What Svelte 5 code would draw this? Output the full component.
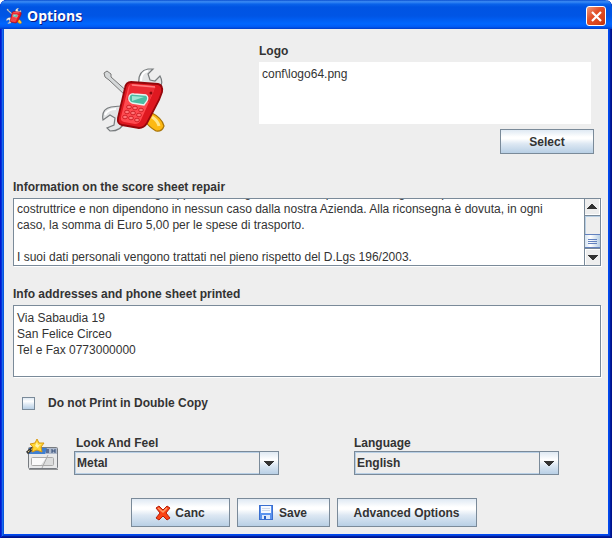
<script>
  import { onMount } from 'svelte';

  let logoPath = $state('conf\\logo64.png');
  let repairInfo = $state(
    [
      'I costi e le attese relativi alla riparazione',
      'Eventuali ritardi e costi degli apparecchi in garanzia, che spettano o vengono imposti dalla casa',
      'costruttrice e non dipendono in nessun caso dalla nostra Azienda. Alla riconsegna è dovuta, in ogni',
      'caso, la somma di Euro 5,00 per le spese di trasporto.',
      '',
      'I suoi dati personali vengono trattati nel pieno rispetto del D.Lgs 196/2003.'
    ].join('\n')
  );
  let addresses = $state('Via Sabaudia 19\nSan Felice Circeo\nTel e Fax 0773000000');
  let singleCopy = $state(false);
  let look = $state('Metal');
  let language = $state('English');
  let repairBox;

  onMount(() => {
    repairBox.scrollTop = repairBox.scrollHeight;
  });

  function scrollLines(n) {
    repairBox.scrollTop += n * 16;
  }
</script>

{#snippet phone(size)}
  <svg class="phone" width={size} height={size} viewBox="0 0 64 64" aria-hidden="true">
    <path d="M3 5 L6 3 L10 6 L10 9 L28 25 L25 28 L8 12 L4 9 Z" fill="#d5d8d9" stroke="#777" stroke-width="1" />
    <path d="M46 49 L51 45 Q61 50 63 58 Q61 64 55 63 Q48 59 44 53 Z" fill="#fdb913" stroke="#a87408" stroke-width="1.2" />
    <path d="M51 49 Q57 53 58 58" fill="none" stroke="#ffe68a" stroke-width="3" />
    <path d="M38 18 Q36 3 47 1 L52 1 L47 6 L49 12 L54 13 L59 8 Q63 15 58 22 L48 30 L23 54 Q21 63 9 63 L6 60 L13 57 L14 50 L9 47 L2 52 Q0 41 10 39 L19 38 Z" fill="#e3e5e6" stroke="#787c7e" stroke-width="1.2" />
    <path d="M40 13 Q40 4 47 3 M4 47 Q7 41 15 41" fill="none" stroke="#fff" stroke-width="2" />
    <path d="M24 20 Q25 14 30 14 L57 16 Q62 17 61 24 L58 32 L46 55 Q43 60 38 60 L21 57 Q16 56 17 50 Z" fill="#df1820" stroke="#96060b" stroke-width="1.8" />
    <path d="M27 20 Q28 16 32 16 L54 18 L52 25 L40 52 Q38 56 34 56 L23 54 Q19 53 20 49 Z" fill="#ff4a50" />
    <path d="M29 17 L55 19 L51 25 L48 34 L26 32 Z" fill="#ec2b33" />
    <path d="M31 17 L54 19" stroke="#ff7d80" stroke-width="1.5" />
    <path d="M28 29 Q29 25 33 26 L45 27 Q48 29 46 33 L43 37 L31 35 Q27 33 28 29 Z" fill="#4cbca3" stroke="#e8f4f0" stroke-width="1.3" />
    <path d="M31 28 L43 29 L31 33 Z" fill="#9fe5d4" />
    <circle cx="50" cy="25" r="1.5" fill="#8c070b" />
    <g fill="#ff7477" stroke="#c4141b" stroke-width=".8">
      <ellipse cx="28" cy="39" rx="2.4" ry="1.8" /><ellipse cx="34" cy="40" rx="2.4" ry="1.8" /><ellipse cx="40" cy="42" rx="2.4" ry="1.8" />
      <ellipse cx="26" cy="44" rx="2.4" ry="1.8" /><ellipse cx="32" cy="45" rx="2.4" ry="1.8" /><ellipse cx="38" cy="47" rx="2.4" ry="1.8" />
      <ellipse cx="24" cy="49" rx="2.4" ry="1.8" /><ellipse cx="30" cy="50" rx="2.4" ry="1.8" /><ellipse cx="36" cy="52" rx="2.4" ry="1.8" />
    </g>
  </svg>
{/snippet}

{#snippet arrow()}
  <svg width="10" height="5" viewBox="0 0 10 5" shape-rendering="crispEdges" aria-hidden="true">
    <path d="M0 0H10V1H9V2H8V3H7V4H6V5H4V4H3V3H2V2H1V1H0Z" fill="#333" />
  </svg>
{/snippet}

<div class="window">
  <header>
    {@render phone(16)}
    <h1>Options</h1>
    <button class="close" aria-label="Close">
      <svg width="11" height="11" viewBox="0 0 11 11" aria-hidden="true">
        <path d="M1 1L10 10M10 1L1 10" stroke="#fff" stroke-width="2.2" />
      </svg>
    </button>
  </header>

  <main>
    <section class="top">
      <div class="preview">{@render phone(64)}</div>
      <div class="logo">
        <label for="logo">Logo</label>
        <textarea id="logo" class="path" spellcheck="false" bind:value={logoPath}></textarea>
        <button class="btn select">Select</button>
      </div>
    </section>

    <section class="group">
      <label for="repair">Information on the score sheet repair</label>
      <div class="box">
        <textarea id="repair" class="repair" spellcheck="false" bind:this={repairBox} bind:value={repairInfo}></textarea>
        <div class="scrollbar">
          <button class="up" aria-label="Scroll up" onclick={() => scrollLines(-1)}>{@render arrow()}</button>
          <div class="track"><div class="thumb"><i></i><i></i><i></i></div></div>
          <button aria-label="Scroll down" onclick={() => scrollLines(1)}>{@render arrow()}</button>
        </div>
      </div>
    </section>

    <section class="group">
      <label for="addresses">Info addresses and phone sheet printed</label>
      <div class="box">
        <textarea id="addresses" class="addresses" spellcheck="false" bind:value={addresses}></textarea>
      </div>
    </section>

    <label class="check"><input type="checkbox" bind:checked={singleCopy} />Do not Print in Double Copy</label>

    <section class="choices">
      <svg class="skin" width="34" height="34" viewBox="0 0 34 34" aria-hidden="true">
        <rect x="2.500" y="9.500" width="29" height="21" rx="1" fill="#e8e9ea" stroke="#777b80" />
        <rect x="3" y="10" width="28" height="6" fill="#3f7fd2" />
        <path d="M21 10H31V16H19Z" fill="#aeb9cb" />
        <rect x="20" y="11" width="3" height="4" fill="#5b6f95" />
        <path d="M26 11v4M29 11v4M26 13h3" stroke="#334c78" stroke-width="1" />
        <rect x="5.500" y="19.500" width="22" height="8" rx="1" fill="#fafafa" stroke="#a9a9a9" />
        <path d="M20 20H27V27H15Z" fill="#dcdddd" />
        <path d="M16 30L22 17" stroke="#aaa" />
        <path d="M3 31.500H32" stroke="#55585c" stroke-opacity=".6" />
        <path d="M1 15L8 9" stroke="#383838" stroke-width="3" />
        <path d="M2 14L7 10" stroke="#e8d48e" stroke-width="1" stroke-dasharray="2 2" />
        <path d="M11 1L13 5L18 5L15 9L16 14L11 12L6 14L7 9L4 6L9 5Z" fill="#ffd633" stroke="#d99a13" />
        <path d="M11 4L12 7L15 6L13 8L12 10L9 8Z" fill="#fff3ad" />
      </svg>
      <div class="choice">
        <label for="look">Look And Feel</label>
        <div class="combo">
          <select id="look" bind:value={look}>
            <option>Metal</option>
            <option>Windows</option>
          </select>
          <span class="drop">{@render arrow()}</span>
        </div>
      </div>
      <div class="choice">
        <label for="language">Language</label>
        <div class="combo">
          <select id="language" bind:value={language}>
            <option>English</option>
            <option>Italiano</option>
          </select>
          <span class="drop">{@render arrow()}</span>
        </div>
      </div>
    </section>

    <footer>
      <button class="btn canc">
        <svg width="16" height="16" viewBox="0 0 16 16" aria-hidden="true">
          <path d="M1 3L4 1L8 5L12 1L15 3L11 8L15 13L12 15L8 11L4 15L1 13L5 8Z" fill="#fa4316" stroke="#b51c08" />
          <path d="M3 3L8 7L12 3" fill="none" stroke="#ff9a68" stroke-width="1.500" />
        </svg>
        Canc
      </button>
      <button class="btn save">
        <svg width="14" height="15" viewBox="0 0 14 15" aria-hidden="true">
          <rect x=".5" y=".5" width="13" height="14" fill="#5b93ee" stroke="#3a6fd0" />
          <rect x="2" y="1" width="10" height="7" fill="#f6f9ff" />
          <path d="M3 3.500H11M3 5.500H11" stroke="#ced8ea" />
          <rect x="3" y="10" width="8" height="4" fill="#dce7fa" />
          <rect x="5" y="11" width="2" height="3" fill="#265ec5" />
        </svg>
        Save
      </button>
      <button class="btn advanced">Advanced Options</button>
    </footer>
  </main>
</div>

<style>
  :global(body) {
    margin: 0;
    background: #fff;
  }

  .window,
  .window button,
  .window textarea,
  .window select {
    font: bold 12px/16px 'Liberation Sans', Arial, sans-serif;
    color: #333;
  }

  .window * {
    box-sizing: border-box;
  }

  .window {
    box-sizing: border-box;
    padding: 0 4px 4px;
    border-radius: 7px 7px 0 0;
    background: #eee;
    box-shadow:
      inset 1px 0 #0019cf,
      inset -1px -1px #00138c,
      inset 2px 0 #0831d9,
      inset -2px -2px #001ea0,
      inset 3px 0 #166aee,
      inset -3px -3px #0441d8,
      inset 4px 0 #0855dd,
      inset -4px -4px #0048f1;
  }

  header {
    display: flex;
    align-items: center;
    gap: 5px;
    height: 29px;
    margin: 0 -4px;
    padding: 3px 6px 0;
    border-radius: 7px 7px 0 0;
    background: linear-gradient(#0a4fd0, #3c8cf5 6%, #0a63ea 14%, #0054e3 24%, #0055e5 55%, #0066ff 82%, #005bf5 92%, #003dc8);
  }

  .window h1 {
    flex: 1;
    margin: 0;
    font: 700 14px/20px 'Open Sans', 'Noto Sans', sans-serif;
    color: #fff;
    text-shadow: 1px 1px #0a1883;
  }

  button {
    padding: 0;
    cursor: default;
  }

  .close {
    display: flex;
    align-items: center;
    justify-content: center;
    width: 20px;
    height: 20px;
    border: 1px solid #fff;
    border-radius: 3px;
    background: linear-gradient(135deg, #f09a7c, #e2512a 40%, #d8431a 75%, #b92f0c);
  }

  main {
    padding: 14px 7px 7px 9px;
  }

  label {
    display: block;
  }

  textarea {
    display: block;
    width: 100%;
    margin: 0;
    border: 0;
    border-radius: 0;
    padding: 4px 3px;
    background: #fff;
    resize: none;
    outline: 0;
    overflow: hidden;
  }

  .window textarea {
    font-weight: normal;
  }

  .top {
    display: flex;
    padding-right: 7px;
  }

  .preview {
    flex: 0 0 246px;
    padding: 25px 0 0 88px;
  }

  .preview .phone {
    display: block;
  }

  .logo {
    flex: 1;
    display: flex;
    flex-direction: column;
  }

  .path {
    width: auto;
    height: 62px;
    margin: 3px 3px 5px 0;
  }

  .btn {
    display: flex;
    align-items: center;
    justify-content: center;
    gap: 4px;
    height: 29px;
    border: 1px solid #7a8a99;
    background: linear-gradient(#dfe9f3, #fff 30%, #fff 38%, #dde8f3 60%, #b8cfe5);
  }

  .select {
    align-self: flex-end;
    width: 94px;
    height: 25px;
  }

  .group {
    margin-top: 20px;
  }

  .top + .group {
    margin-top: 25px;
  }

  .box {
    display: flex;
    margin-top: 3px;
    border: 1px solid #7a8a99;
    box-shadow: 1px 1px #fff;
  }

  .repair {
    flex: 1;
    height: 66px;
    padding-bottom: 0;
    scrollbar-width: none;
    overflow-y: scroll;
  }

  .scrollbar {
    display: flex;
    flex-direction: column;
    width: 16px;
    border-left: 1px solid #7a8a99;
    background: #eee;
  }

  .scrollbar button {
    display: flex;
    align-items: center;
    justify-content: center;
    height: 16px;
    border: 0;
    background: #eee;
    box-shadow: inset 1px 1px #fff;
  }

  .up {
    transform: rotate(180deg);
  }

  .track {
    display: flex;
    flex: 1;
    flex-direction: column;
    justify-content: flex-end;
    border-top: 1px solid #7a8a99;
    border-bottom: 1px solid #7a8a99;
    box-shadow: inset 1px 1px #b8cfe5;
  }

  .thumb {
    display: flex;
    flex-direction: column;
    align-items: center;
    justify-content: center;
    gap: 1px;
    height: 14px;
    border: solid #6382bf;
    border-width: 1px 0;
    background: linear-gradient(90deg, #d5e3f2, #fff 35%, #b8cfe5);
  }

  .thumb i {
    width: 9px;
    height: 1px;
    background: #6382bf;
  }

  .addresses {
    height: 70px;
  }

  .check {
    display: flex;
    align-items: center;
    gap: 13px;
    margin: 18px 0 0 9px;
  }

  .check input {
    appearance: none;
    width: 13px;
    height: 13px;
    margin: 0;
    border: 1px solid #7a8a99;
    background: linear-gradient(#dfe9f3, #fff 30%, #dde8f3 60%, #b8cfe5);
  }

  .check input:checked {
    background: #333;
  }

  .choices {
    display: flex;
    align-items: center;
    margin: 24px 42px 0 13px;
  }

  .skin {
    flex: none;
    margin-right: 14px;
  }

  .choice {
    flex: 1;
  }

  .choice + .choice {
    margin-left: 75px;
  }

  .choice label {
    padding-left: 2px;
  }

  .choice + .choice label {
    padding-left: 0;
  }

  .combo {
    position: relative;
  }

  select {
    display: block;
    appearance: none;
    width: 100%;
    height: 24px;
    padding: 0 24px 0 2px;
    border: 1px solid #7a8a99;
    border-radius: 0;
    background: #eee;
    box-shadow: inset 0 0 0 1px #b8cfe5;
  }

  .drop {
    position: absolute;
    inset: 0 0 0 auto;
    display: flex;
    align-items: center;
    justify-content: center;
    width: 20px;
    border: 1px solid #7a8a99;
    background: linear-gradient(#dfe9f3, #fff 35%, #dde8f3 60%, #b8cfe5);
    pointer-events: none;
  }

  footer {
    display: flex;
    gap: 7px;
    justify-content: center;
    margin-top: 23px;
    padding-right: 7px;
  }

  .canc {
    width: 99px;
  }

  .save {
    width: 93px;
    gap: 6px;
  }

  .advanced {
    width: 140px;
  }
</style>
